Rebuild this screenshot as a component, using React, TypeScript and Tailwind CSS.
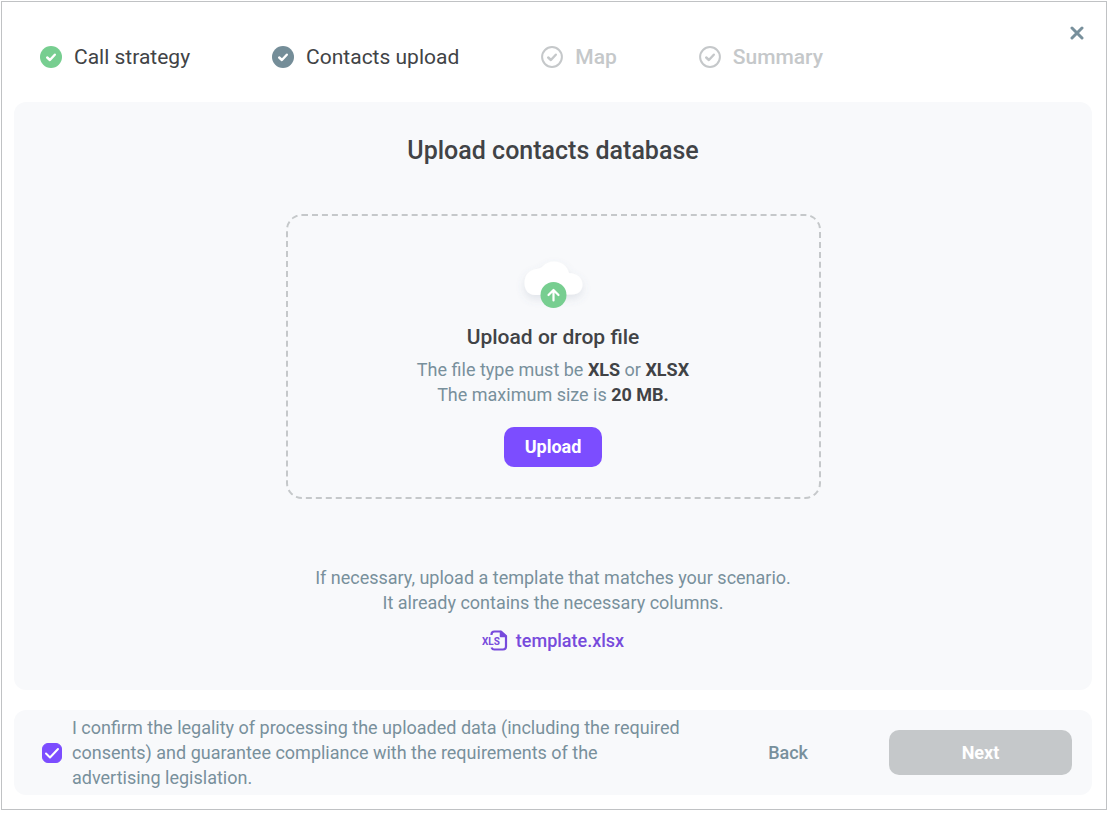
import { ChangeEvent, useRef, useState } from "react";

type StepState = "done" | "current" | "pending";

const steps: { label: string; state: StepState }[] = [
    { label: "Call strategy", state: "done" },
    { label: "Contacts upload", state: "current" },
    { label: "Map", state: "pending" },
    { label: "Summary", state: "pending" },
];

const iconColors = {
    done: "text-[#77ce90]",
    current: "text-[#748d98]",
    pending: "text-[#c5c8ca]",
};

function StepIcon({ state }: { state: StepState }) {
    const pending = state === "pending";

    return (
        <svg className={`size-[22px] shrink-0 ${iconColors[state]}`} viewBox="0 0 22 22" fill="none" aria-hidden="true">
            {pending ? (
                <circle cx="11" cy="11" r="9.9" stroke="currentColor" strokeWidth="2" />
            ) : (
                <circle cx="11" cy="11" r="11" fill="currentColor" />
            )}
            <path d="M7.2 11.5l2.7 2.5 4.9-5.3" stroke={pending ? "currentColor" : "#fff"} strokeWidth="2.4" strokeLinecap="round" strokeLinejoin="round" />
        </svg>
    )
}

function CloudUpload() {
    return (
        <svg className="w-[80px] h-[60px]" viewBox="0 0 80 60" fill="none" aria-hidden="true">
            <defs>
                <filter id="cloud-shadow" x="-20%" y="-20%" width="140%" height="160%">
                    <feDropShadow dx="0" dy="4" stdDeviation="4" floodColor="#64748b" floodOpacity="0.16" />
                </filter>
            </defs>
            <path filter="url(#cloud-shadow)" d="M22 45C15.5 45 11.5 40 11.5 33C11.5 25 16 20 23.5 19C27 18.5 28 18 30 16C33 13 36.5 11.5 41 11.5C49 11.5 54.5 16.5 56 23C64 23 69.5 28 69.5 34.5C69.5 40.5 65.5 44.5 59 44.5Z" fill="#fff" />
            <circle cx="40.5" cy="45" r="13" fill="#77ce90" />
            <path d="M40.5 50.5V40M35.5 45l5-5 5 5" stroke="#fff" strokeWidth="2.2" strokeLinecap="round" strokeLinejoin="round" />
        </svg>
    )
}

function XlsIcon() {
    return (
        <svg className="w-[26px] h-[22px]" viewBox="0 0 26 22" fill="none" aria-hidden="true">
            <path d="M9.5 5V4.5a3 3 0 0 1 3-3H19L24 6V16.500a3 3 0 0 1-3 3H12.500a3 3 0 0 1-3-2" stroke="currentColor" strokeWidth="2.2" strokeLinejoin="round" />
            <path d="M18.5 1.500V6.500H24Z" fill="currentColor" stroke="currentColor" strokeWidth="1.5" strokeLinejoin="round" />
            <text x="0" y="15" fill="currentColor" fontFamily="Roboto, sans-serif" fontWeight="700" fontSize="10">XLS</text>
        </svg>
    )
}

export default function App() {
    const [confirmed, setConfirmed] = useState<boolean>(true);
    const fileInput = useRef<HTMLInputElement>(null);

    const changeConfirmed = (e: ChangeEvent<HTMLInputElement>) => {
        setConfirmed(e.target.checked);
    }

    return (
        <div className="mt-px ml-px mr-0.5 pl-3 pr-3.5 pb-3.5 border border-[#c0c2c4] bg-white font-[Roboto,sans-serif] text-lg leading-[25px] text-[#78909c]">
            <header className="flex items-start justify-between pl-[26px] pr-2 pt-[22px] pb-8">
                <ol className="flex items-center gap-[82px] pt-5 text-[21px] leading-[26px]">
                    {steps.map((step) => (
                        <li key={step.label} className="flex items-center gap-3" aria-current={step.state === "current" ? "step" : undefined}>
                            <StepIcon state={step.state} />
                            <span className={step.state === "pending" ? "font-medium text-[#c5c8ca]" : "text-[#414346]"}>{step.label}</span>
                        </li>
                    ))}
                </ol>
                <button type="button" aria-label="Close" className="flex size-[14px] mt-0.5 items-center justify-center cursor-pointer">
                    <svg className="size-[14px]" viewBox="0 0 14 14" fill="none" aria-hidden="true">
                        <path d="M2 2l10 10M12 2L2 12" stroke="currentColor" strokeWidth="3" strokeLinecap="round" />
                    </svg>
                </button>
            </header>

            <main className="flex flex-col items-center rounded-xl bg-[#f8f9fb] px-6 pt-[33px] pb-[37px] text-center">
                <h1 className="text-[25px] leading-8 font-medium text-[#414346]">Upload contacts database</h1>

                <section className="mt-[47px] flex w-full max-w-[535px] flex-col items-center rounded-2xl border-2 border-dashed border-[#c5c8ca] pt-[34px] pb-[30px]">
                    <CloudUpload />
                    <h2 className="mt-3.5 text-[21px] leading-[26px] font-medium text-[#414346]">Upload or drop file</h2>
                    <p className="mt-[7px]">
                        The file type must be <b className="font-bold text-[#414346]">XLS</b> or <b className="font-bold text-[#414346]">XLSX</b>
                        <br />
                        The maximum size is <b className="font-bold text-[#414346]">20 MB.</b>
                    </p>
                    <input ref={fileInput} type="file" accept=".xls,.xlsx" aria-label="Contacts file" className="hidden" />
                    <button type="button" onClick={() => fileInput.current?.click()} className="mt-5 h-10 rounded-[10px] bg-[#7c4dff] px-[21px] pb-0.5 font-bold text-white cursor-pointer">Upload</button>
                </section>

                <p className="mt-[66px]">
                    If necessary, upload a template that matches your scenario.
                    <br />
                    It already contains the necessary columns.
                </p>
                <a href="#template" className="mt-[13px] flex items-center gap-2 font-medium text-[#774bdc]">
                    <XlsIcon />
                    template.xlsx
                </a>
            </main>

            <footer className="mt-5 flex items-center rounded-xl bg-[#f8f9fb] py-[5px] pl-7 pr-5">
                <label className="flex items-center gap-2.5 cursor-pointer">
                    <span className="relative size-5 shrink-0">
                        <input type="checkbox" checked={confirmed} onChange={changeConfirmed} className="peer block size-5 appearance-none rounded-md border border-[#738c99] checked:border-[#7c4dff] checked:bg-[#7c4dff]" />
                        <svg className="pointer-events-none absolute inset-0 hidden size-5 peer-checked:block" viewBox="0 0 20 20" fill="none" aria-hidden="true">
                            <path d="M4 10.5l4 4 8-8.5" stroke="#fff" strokeWidth="2" strokeLinecap="round" strokeLinejoin="round" />
                        </svg>
                    </span>
                    <span className="max-w-[618px]">I confirm the legality of processing the uploaded data (including the required consents) and guarantee compliance with the requirements of the advertising legislation.</span>
                </label>
                <div className="ml-auto flex shrink-0 items-center gap-[81px]">
                    <button type="button" className="font-medium cursor-pointer">Back</button>
                    <button type="button" disabled className="h-[45px] w-[183px] rounded-[10px] bg-[#c5c8ca] font-bold text-white">Next</button>
                </div>
            </footer>
        </div>
    )
}
